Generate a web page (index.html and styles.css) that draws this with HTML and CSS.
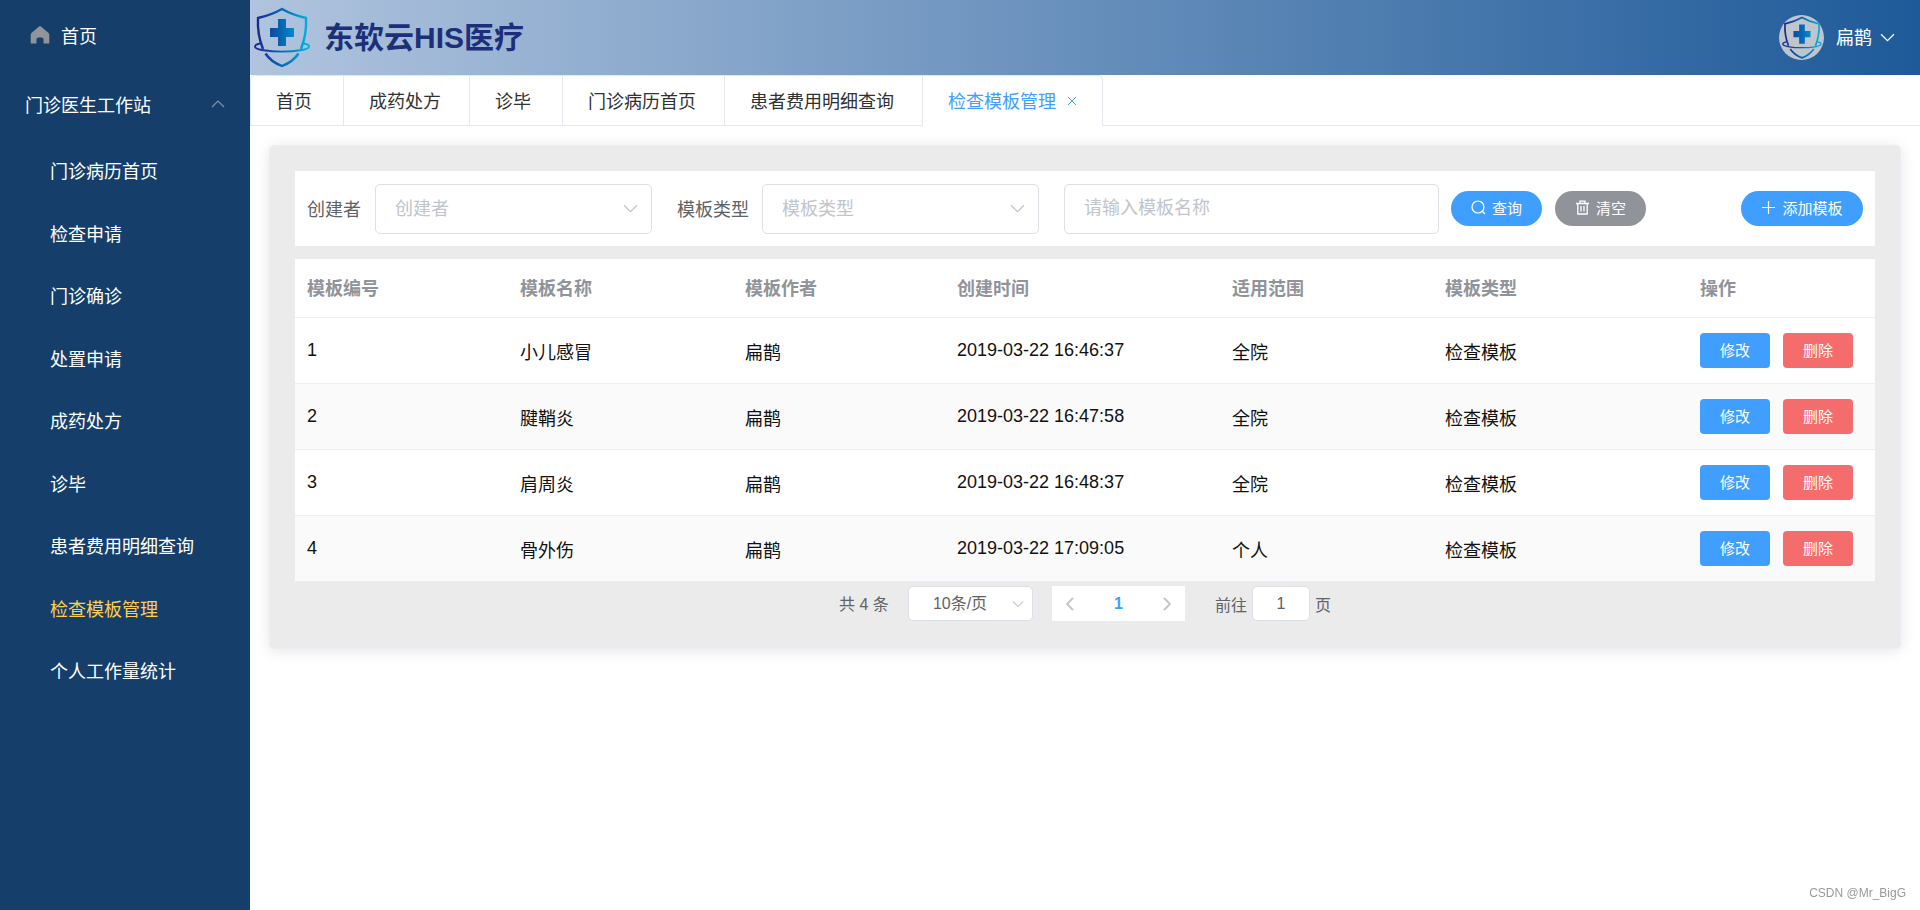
FILE: index.html
```html
<!DOCTYPE html>
<html lang="zh-CN">
<head>
<meta charset="utf-8">
<title>东软云HIS医疗</title>
<link rel="stylesheet" href="styles.css">
</head>
<body>
<svg class="defs" aria-hidden="true">
  <defs>
    <linearGradient id="brand" gradientUnits="userSpaceOnUse" x1="4" y1="0" x2="52" y2="0">
      <stop offset="0" stop-color="#1c2b90"/>
      <stop offset="0.5" stop-color="#0568b4"/>
      <stop offset="1" stop-color="#05acdf"/>
    </linearGradient>
    <symbol id="logo" viewBox="0 0 56 62">
      <g fill="none" stroke="url(#brand)">
        <path stroke-width="2.4" d="M9 42C5 32 3.500 20 4 11C13 9 21 6 28 2C35 6 43 9 52 11C52.500 20 51 32 47 42M11.500 46.500C15 52 20 56 28 59C36 56 41 52 44.500 46.500"/>
        <path stroke-width="1.800" d="M6 36.500C-1 38 -1 41.500 8 43C20 45 36 45 48 43C57 41.500 57 38 50 36.500"/>
      </g>
      <path fill="url(#brand)" d="M24 12h8v9h8v9h-8v9h-8v-9h-8v-9h8z"/>
    </symbol>
    <symbol id="down" viewBox="0 0 14 14"><path d="M1 4l6 6 6-6" fill="none" stroke="currentColor" stroke-width="1.200"/></symbol>
  </defs>
</svg>
<div class="app">
  <nav class="sidebar">
    <a class="menu-home" href="#">
      <svg class="home-icon" viewBox="0 0 20 18"><path fill="#909399" d="M10 0Q10.500 0 11 0.500L18.500 7Q19.300 7.700 19.300 8.800V17.500H13.500V13.500Q13.500 11.500 11.500 11.500H8.500Q6.500 11.500 6.500 13.500V17.500H0.700V8.800Q0.700 7.700 1.500 7L9 0.500Q9.500 0 10 0z"/></svg>
      首页
    </a>
    <button class="menu-title" type="button">门诊医生工作站
      <svg class="up-icon" viewBox="0 0 14 14"><path d="M1 10l6-6 6 6" fill="none" stroke="#8193a8" stroke-width="1.200"/></svg>
    </button>
    <ul class="submenu">
      <li><a href="#">门诊病历首页</a></li>
      <li><a href="#">检查申请</a></li>
      <li><a href="#">门诊确诊</a></li>
      <li><a href="#">处置申请</a></li>
      <li><a href="#">成药处方</a></li>
      <li><a href="#">诊毕</a></li>
      <li><a href="#">患者费用明细查询</a></li>
      <li><a class="current" href="#">检查模板管理</a></li>
      <li><a href="#">个人工作量统计</a></li>
    </ul>
  </nav>
  <div class="content">
    <header class="topbar">
      <svg class="logo"><use href="#logo"/></svg>
      <h1 class="brand-name">东软云HIS医疗</h1>
      <button class="user" type="button">
        <span class="avatar"><svg class="avatar-logo"><use href="#logo"/></svg></span>
        <span class="user-name">扁鹊</span>
        <svg class="user-arrow"><use href="#down"/></svg>
      </button>
    </header>
    <div class="tabs">
      <a class="tab" href="#">首页</a>
      <a class="tab" href="#">成药处方</a>
      <a class="tab" href="#">诊毕</a>
      <a class="tab" href="#">门诊病历首页</a>
      <a class="tab" href="#">患者费用明细查询</a>
      <a class="tab tab-active" href="#">检查模板管理<svg class="tab-close" viewBox="0 0 10 10"><path d="M1 1l8 8M9 1l-8 8" stroke="currentColor" fill="none"/></svg></a>
    </div>
    <main class="card">
      <form class="filters">
        <label class="label" for="creator">创建者</label>
        <span class="select-box">
          <select class="control select" id="creator"><option>创建者</option></select>
          <svg class="select-arrow"><use href="#down"/></svg>
        </span>
        <label class="label label-next" for="kind">模板类型</label>
        <span class="select-box">
          <select class="control select" id="kind"><option>模板类型</option></select>
          <svg class="select-arrow"><use href="#down"/></svg>
        </span>
        <input class="control name-input" type="text" placeholder="请输入模板名称" aria-label="模板名称">
        <button class="btn btn-round btn-primary" type="button">
          <svg class="btn-icon" viewBox="0 0 15 15"><g fill="none" stroke="currentColor" stroke-width="1.200"><circle cx="7" cy="7" r="6"/><path d="M11 11l3 3"/></g></svg>查询
        </button>
        <button class="btn btn-round btn-info" type="button">
          <svg class="btn-icon" viewBox="0 0 15 15"><path fill="none" stroke="currentColor" stroke-width="1.300" d="M1 3.500h13M5 3.500V1.200h5V3.500M2.800 3.500V14h9.400V3.500M6 6v5.500M9 6v5.500"/></svg>清空
        </button>
        <button class="btn btn-round btn-primary btn-add" type="button">
          <svg class="btn-icon" viewBox="0 0 15 15"><path fill="none" stroke="currentColor" stroke-width="1.200" d="M7.500 1v13M1 7.500h13"/></svg>添加模板
        </button>
      </form>
      <table class="table">
        <colgroup><col class="c-id"><col class="c-name"><col class="c-author"><col class="c-time"><col class="c-scope"><col class="c-kind"><col class="c-actions"></colgroup>
        <thead>
          <tr><th>模板编号</th><th>模板名称</th><th>模板作者</th><th>创建时间</th><th>适用范围</th><th>模板类型</th><th>操作</th></tr>
        </thead>
        <tbody>
          <tr><td>1</td><td>小儿感冒</td><td>扁鹊</td><td>2019-03-22 16:46:37</td><td>全院</td><td>检查模板</td><td><div class="actions"><button class="btn btn-primary" type="button">修改</button><button class="btn btn-danger" type="button">删除</button></div></td></tr>
          <tr><td>2</td><td>腱鞘炎</td><td>扁鹊</td><td>2019-03-22 16:47:58</td><td>全院</td><td>检查模板</td><td><div class="actions"><button class="btn btn-primary" type="button">修改</button><button class="btn btn-danger" type="button">删除</button></div></td></tr>
          <tr><td>3</td><td>肩周炎</td><td>扁鹊</td><td>2019-03-22 16:48:37</td><td>全院</td><td>检查模板</td><td><div class="actions"><button class="btn btn-primary" type="button">修改</button><button class="btn btn-danger" type="button">删除</button></div></td></tr>
          <tr><td>4</td><td>骨外伤</td><td>扁鹊</td><td>2019-03-22 17:09:05</td><td>个人</td><td>检查模板</td><td><div class="actions"><button class="btn btn-primary" type="button">修改</button><button class="btn btn-danger" type="button">删除</button></div></td></tr>
        </tbody>
      </table>
      <div class="pagination">
        <span class="total">共 4 条</span>
        <span class="select-box size-box">
          <select class="control size-select" aria-label="每页条数"><option>10条/页</option></select>
          <svg class="select-arrow size-arrow"><use href="#down"/></svg>
        </span>
        <div class="pager">
          <button class="page" type="button" aria-label="上一页"><svg class="page-icon" viewBox="0 0 14 14"><path d="M10 1L4 7l6 6" fill="none" stroke="currentColor" stroke-width="1.800"/></svg></button>
          <button class="page page-current" type="button">1</button>
          <button class="page" type="button" aria-label="下一页"><svg class="page-icon" viewBox="0 0 14 14"><path d="M4 1l6 6-6 6" fill="none" stroke="currentColor" stroke-width="1.800"/></svg></button>
        </div>
        <label class="jump">前往<input class="control jump-input" type="text" value="1">页</label>
      </div>
    </main>
  </div>
</div>
<div class="watermark">CSDN @Mr_BigG</div>
</body>
</html>
```
FILE: styles.css
```css
* { box-sizing: border-box; }
body {
  margin: 0;
  background: #fff;
  color: #111;
  font-family: "Liberation Sans", "Noto Sans CJK SC", sans-serif;
  font-size: 18px;
}
a { color: inherit; text-decoration: none; }
button, input, select { font: inherit; color: inherit; margin: 0; }
.defs { position: absolute; width: 0; height: 0; }
.app { display: flex; min-height: 100vh; }

.sidebar { flex: none; width: 250px; background: #153f6a; color: #fff; }
.menu-home { display: flex; align-items: center; gap: 11px; height: 70px; padding-left: 30px; }
.home-icon { width: 20px; height: 18px; }
.menu-title {
  display: flex; align-items: center; justify-content: space-between;
  width: 100%; height: 70px; padding: 0 25px 2px;
  border: 0; background: none; text-align: left;
}
.up-icon { width: 14px; height: 14px; }
.submenu { margin: 0; padding: 0; list-style: none; }
.submenu a { display: flex; align-items: center; height: 62px; padding: 0 0 2px 50px; }
.submenu li:nth-child(even) a { height: 63px; }
.submenu .current { color: #ffd04b; }

.content { flex: 1; min-width: 0; }
.topbar {
  display: flex; align-items: center; height: 75px; padding: 0 25px 0 4px;
  background: linear-gradient(to right, #b0c4de, #1e5a99);
}
.logo { width: 56px; height: 62px; }
.brand-name { margin: 0 0 0 14px; font-size: 30px; line-height: 40px; color: #1d2f78; }
.user {
  display: flex; align-items: center; gap: 8px; margin-left: auto; padding: 0;
  border: 0; background: none; color: #fff;
}
.user-name { padding: 0 0 4px 4px; }
.avatar {
  display: flex; align-items: center; justify-content: center;
  width: 45px; height: 45px; border-radius: 50%; background: #c0c4cc;
}
.avatar-logo { width: 40px; height: 44px; }
.user-arrow { width: 15px; height: 15px; }

.tabs { display: flex; height: 51px; border-bottom: 1px solid #e4e7ed; }
.tab {
  display: flex; align-items: center; min-width: 93px; height: 50px; padding: 0 28px 2px 25px;
  border-left: 1px solid #e4e7ed; border-top: 1px solid #e4e7ed; color: #303133;
}
.tab:first-child { border-top-left-radius: 5px; }
.tab-active {
  height: 51px; padding-right: 25px; border-right: 1px solid #e4e7ed;
  border-top-right-radius: 5px; background: #fff; color: #409eff;
}
.tab-close { width: 10px; height: 10px; margin: 2px 0 0 11px; }

.card {
  margin: 19px; padding: 25px;
  border: 1px solid #ebeef5; border-radius: 5px; background: #ebebeb;
  box-shadow: 0 2px 15px rgba(0, 0, 0, 0.1);
}
.filters { display: flex; align-items: center; height: 75px; padding: 0 12px; background: #fff; color: #606266; }
.label { width: 68px; padding-bottom: 2px; white-space: nowrap; }
.label-next { width: 85px; margin-left: 25px; }
.control { border: 1px solid #dcdfe6; border-radius: 5px; background: #fff; outline: 0; }
.select-box { position: relative; display: flex; }
.select { width: 277px; height: 50px; padding: 0 19px; appearance: none; color: #c0c4cc; }
.select-arrow {
  position: absolute; right: 14px; top: 50%; width: 15px; height: 15px; margin-top: -8px;
  color: #c0c4cc; pointer-events: none;
}
.name-input { width: 375px; height: 50px; margin: 0 12px 0 25px; padding: 0 19px; }
.name-input::placeholder { color: #c0c4cc; opacity: 1; }

.btn {
  display: flex; align-items: center; justify-content: center; gap: 6px;
  width: 70px; height: 35px; padding: 0 0 2px; border: 0; border-radius: 4px;
  color: #fff; font-size: 15px;
}
.btn-round { width: 91px; margin-right: 13px; border-radius: 18px; }
.btn-primary { background: #409eff; }
.btn-info { background: #909399; }
.btn-danger { background: #f56c6c; }
.btn-add { width: 122px; margin: 0 0 0 auto; }
.btn-icon { width: 15px; height: 15px; }

.table { width: 100%; margin-top: 13px; table-layout: fixed; border-spacing: 0; background: #fff; }
.table th, .table td { padding: 0 12px; border-bottom: 1px solid #ebeef5; text-align: left; }
.table th { height: 59px; padding-bottom: 2px; color: #909399; }
.table td { height: 66px; }
.table tbody tr:nth-child(even) { background: #fafafa; }
.c-id, .c-scope { width: 213px; }
.c-name { width: 225px; }
.c-author { width: 212px; }
.c-time { width: 275px; }
.c-kind { width: 255px; }
.c-actions { width: 187px; }
.actions { display: flex; gap: 13px; }

.pagination {
  display: flex; align-items: center; justify-content: center; height: 39px; padding-top: 4px;
  margin-bottom: 2px; color: #606266; font-size: 16px;
}
.total { padding-bottom: 2px; }
.size-box { margin: 0 19px; }
.size-select { width: 125px; height: 35px; padding: 0 24px; appearance: none; }
.size-arrow { right: 9px; width: 12px; height: 12px; margin-top: -6px; }
.pager { display: flex; background: #fff; }
.page {
  display: flex; align-items: center; justify-content: center;
  width: 44px; height: 35px; padding: 0 8px 0 0; border: 0; background: none; color: #c0c4cc;
}
.page:last-child { padding: 0 0 0 8px; }
.page-current { width: 45px; padding: 0; color: #409eff; font-weight: bold; }
.page-icon { width: 14px; height: 14px; }
.jump { display: flex; align-items: center; gap: 5px; margin-left: 30px; }
.jump-input { width: 58px; height: 35px; padding: 0; text-align: center; }

.watermark { position: fixed; right: 14px; bottom: 9px; color: #999; font-size: 12px; line-height: 16px; }
```
